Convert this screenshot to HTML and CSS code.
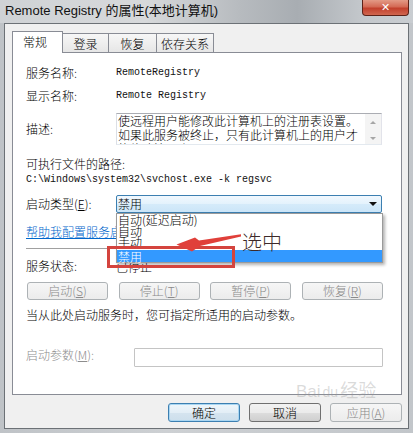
FILE: index.html
```html
<!DOCTYPE html>
<html lang="zh-CN">
<head>
  <meta charset="UTF-8">
  <title>Remote Registry 的属性</title>
  <link rel="stylesheet" href="styles.css">
</head>
<body>
  <div class="window">
    <div class="titlebar">
      <span class="title">Remote Registry 的属性(本地计算机)</span>
      <span class="btn-close">&#x2715;</span>
    </div>
    <div class="client">
      <div class="tabs">
        <span class="tab active">常规</span>
        <span class="tab t-logon">登录</span>
        <span class="tab t-recover">恢复</span>
        <span class="tab t-deps">依存关系</span>
      </div>
      <div class="panel">
        <div class="field f-name">
          <span class="label">服务名称:</span>
          <span class="mono">RemoteRegistry</span>
        </div>
        <div class="field f-display">
          <span class="label">显示名称:</span>
          <span class="mono">Remote Registry</span>
        </div>
        <div class="field f-desc">
          <span class="label">描述:</span>
          <div class="desc-box">
            <div class="desc-text">使远程用户能修改此计算机上的注册表设置。如果此服务被终止，只有此计算机上的用户才能修改注册表。</div>
            <div class="scroll"><i class="up"></i><i class="down"></i></div>
          </div>
        </div>
        <div class="field f-path">可执行文件的路径:</div>
        <div class="mono path">C:\Windows\system32\svchost.exe -k regsvc</div>
        <div class="field f-start">
          <span class="label">启动类型(<u>E</u>):</span>
          <div class="combo">
            <span class="combo-value">禁用</span>
            <span class="combo-arrow"></span>
            <ul class="combo-list">
              <li>自动(延迟启动)</li>
              <li>自动</li>
              <li>手动</li>
              <li class="selected">禁用</li>
            </ul>
          </div>
        </div>
        <a class="help-link" href="javascript:void(0);">帮助我配置服务启动选项。</a>
        <div class="sep"></div>
        <div class="field f-status">
          <span class="label">服务状态:</span>
          <span class="status">已停止</span>
        </div>
        <div class="svc-buttons">
          <button class="btn" disabled>启动(<u>S</u>)</button>
          <button class="btn" disabled>停止(<u>T</u>)</button>
          <button class="btn" disabled>暂停(<u>P</u>)</button>
          <button class="btn" disabled>恢复(<u>R</u>)</button>
        </div>
        <p class="hint">当从此处启动服务时，您可指定所适用的启动参数。</p>
        <div class="field f-param">
          <span class="label">启动参数(<u>M</u>):</span>
          <span class="param-input"></span>
        </div>

        <!-- 标注 -->
        <div class="mark-box"></div>
        <svg class="mark-arrow" width="90" height="30" viewBox="0 0 90 30">
          <polygon points="16.5,14.5 35,7.5 39,10.5 81,4.3 81,6.5 40,16 32,21.5" fill="#e0403a"/>
        </svg>
        <span class="mark-text">选中</span>
      </div>
      <div class="actions">
        <button class="btn default">确定</button>
        <button class="btn">取消</button>
        <button class="btn" disabled>应用(<u>A</u>)</button>
      </div>
    </div>
    <span class="watermark">Bai<b>du</b><em>经验</em></span>
  </div>
</body>
</html>
```

FILE: styles.css
```css
/* 通用样式 */
* {
  margin: 0;
  padding: 0;
  box-sizing: border-box;
}
body {
  width: 413px;
  height: 433px;
  overflow: hidden;
  font: 300 12px/16px "Noto Sans CJK SC", "Liberation Sans", sans-serif;
  color: #000;
  background: #c6cace;
}
ul {
  list-style: none;
}

/* 窗口外框 */
.window {
  position: relative;
  width: 413px;
  height: 433px;
  background: linear-gradient(90deg, #bfc3c7 0%, #cdd0d3 40%, #c2c6ca 100%);
}
.titlebar {
  display: flex;
  align-items: flex-start;
  height: 23px;
  padding-left: 5px;
  background: linear-gradient(90deg, #cfd2d5 0%, #d7d9db 35%, #b7bbbf 58%, #a8adb2 72%, #c4c8cc 88%, #c9cdd1 100%);
}
.title {
  font: 13px/22px "Liberation Sans", "Noto Sans CJK SC", sans-serif;
  color: #111;
}
.btn-close {
  margin-left: auto;
  margin-right: 4px;
  width: 47px;
  height: 16px;
  border: 1px solid #5d2218;
  border-top: none;
  border-radius: 0 0 4px 4px;
  font: bold 11px/15px "DejaVu Sans", sans-serif;
  text-align: center;
  color: #fff;
  background: linear-gradient(#e39a86 0%, #d46a55 45%, #c2402c 55%, #d0664f 100%);
}

/* 客户区 */
.client {
  display: flex;
  flex-direction: column;
  width: 405px;
  height: 406px;
  margin-left: 4px;
  padding: 7px 6px 0 7px;
  border: 1px solid #6c7176;
  background: #f0f0f0;
}

/* 选项卡 */
.tabs {
  position: relative;
  z-index: 2;
  display: flex;
  align-items: flex-end;
  height: 21px;
}
.tab {
  height: 19px;
  margin-left: -1px;
  border: 1px solid #898c95;
  border-bottom: none;
  text-align: center;
  line-height: 19px;
  background: linear-gradient(#f7f7f7, #e6e6e6);
}
.tab.active {
  width: 51px;
  height: 22px;
  margin-left: 0;
  margin-bottom: -1px;
  padding-right: 5px;
  line-height: 20px;
  background: #fff;
}
.tab.t-logon { width: 47px; }
.tab.t-recover { width: 49px; }
.tab.t-deps { width: 58px; }

/* 内容面板 */
.panel {
  position: relative;
  height: 343px;
  padding: 12px 18px 0 13px;
  border: 1px solid #898c95;
  background: #fff;
}
.field {
  display: flex;
  align-items: center;
  height: 16px;
}
.label {
  flex: none;
  width: 90px;
}
.mono {
  font: 10px/14px "Liberation Mono", "DejaVu Sans Mono", monospace;
  color: #111;
}
.f-display { margin-top: 7px; }
.f-desc {
  height: 32px;
  margin-top: 9px;
}
.f-path { margin-top: 11px; }
.path {
  height: 14px;
  line-height: 15px;
}

/* 描述框 */
.desc-box {
  display: flex;
  width: 266px;
  height: 32px;
  border: 1px solid #abadb3;
  border-color: #abadb3 #e2e3ea #e3e9ef #dbdfe6;
}
.desc-text {
  flex: 1;
  height: 30px;
  padding-left: 1px;
  line-height: 14px;
  overflow: hidden;
}
.scroll {
  display: flex;
  flex-direction: column;
  justify-content: space-between;
  align-items: center;
  width: 16px;
  padding: 7px 0 4px;
  background: #f4f4f4;
}
.scroll i {
  width: 0;
  height: 0;
  border: 3px solid transparent;
}
.scroll .up {
  border-top: none;
  border-bottom-color: #a6a6a6;
}
.scroll .down {
  border-bottom: none;
  border-top-color: #a6a6a6;
}

/* 启动类型下拉框 */
.f-start {
  height: 18px;
  margin-top: 9px;
}
.combo {
  position: relative;
  z-index: 3;
  display: flex;
  align-items: center;
  width: 266px;
  height: 18px;
  padding-left: 1px;
  border: 1px solid #3c7fb1;
  border-radius: 2px;
  background: linear-gradient(#f1f8fe 0%, #e3f2fc 50%, #d5ebfa 51%, #cbe5f8 100%);
}
.combo-arrow {
  margin-left: auto;
  margin-right: 4px;
  border: 4px solid transparent;
  border-top: 4px solid #111;
  border-bottom: none;
}
.combo-list {
  position: absolute;
  top: 17px;
  left: -1px;
  width: 267px;
  height: 50px;
  border: 1px solid #9a9a9a;
  background: #fff;
  box-shadow: 2px 2px 3px rgba(0, 0, 0, .3);
}
.combo-list li {
  height: 11px;
  padding-left: 1px;
  line-height: 11px;
}
.combo-list li.selected {
  height: 12px;
  margin-top: 3px;
  line-height: 13px;
  color: #fff;
  background: #3399ff;
}

/* 帮助链接与分隔线 */
.help-link {
  display: block;
  height: 16px;
  margin-top: 11px;
  color: #0066cc;
  text-decoration: underline;
  white-space: nowrap;
}
.sep {
  height: 1px;
  margin-top: 8px;
  background: #a0a0a0;
}
.f-status { margin-top: 9px; }
.status {
  position: relative;
  top: 1px;
}

/* 按钮 */
.btn {
  height: 18px;
  border: 1px solid #707070;
  border-radius: 3px;
  font: 300 12px/16px "Noto Sans CJK SC", sans-serif;
  color: #000;
  background: linear-gradient(#f2f2f2 0%, #ebebeb 50%, #dddddd 51%, #cfcfcf 100%);
}
.btn:disabled {
  border-color: #adb2b5;
  color: #8a8a8a;
  background: linear-gradient(#f6f6f6, #ececec);
}
.btn.default {
  border-color: #3c7fb1;
  background: linear-gradient(#eef6fb 0%, #e3eef6 50%, #d5e4ef 51%, #cddfec 100%);
  box-shadow: inset 0 0 0 1px #a9d6f2;
}
.svc-buttons {
  display: flex;
  justify-content: space-between;
  margin-top: 8px;
  padding-left: 1px;
}
.svc-buttons .btn {
  width: 81px;
}
.hint {
  height: 16px;
  margin-top: 7px;
}
.f-param {
  height: 19px;
  margin-top: 25px;
  align-items: flex-start;
  color: #8d8d8d;
}
.f-param .label {
  width: 108px;
  line-height: 14px;
}
.param-input {
  flex: 1;
  height: 19px;
  border: 1px solid #c4c4c4;
  border-radius: 1px;
}

/* 底部按钮 */
.actions {
  display: flex;
  justify-content: flex-end;
  gap: 9px;
  margin-top: 8px;
}
.actions .btn {
  width: 72px;
  height: 19px;
}

/* 红色标注 */
.mark-box {
  position: absolute;
  z-index: 5;
  left: 94px;
  top: 193px;
  width: 128px;
  height: 22px;
  border: 3px solid #d4443e;
}
.mark-arrow {
  position: absolute;
  z-index: 5;
  left: 147px;
  top: 177px;
}
.mark-text {
  position: absolute;
  z-index: 5;
  left: 229px;
  top: 178px;
  font-size: 20px;
  line-height: 22px;
  color: #3d2a2a;
}

/* 水印 */
.watermark {
  position: absolute;
  left: 296px;
  top: 381px;
  font: 17px/20px "Liberation Sans", "Noto Sans CJK SC", sans-serif;
  color: rgba(150, 150, 150, .35);
}
.watermark b {
  font-weight: normal;
  font-size: 14px;
  margin: 0 2px;
}
.watermark em {
  font-style: normal;
  font-size: 18px;
}
```
